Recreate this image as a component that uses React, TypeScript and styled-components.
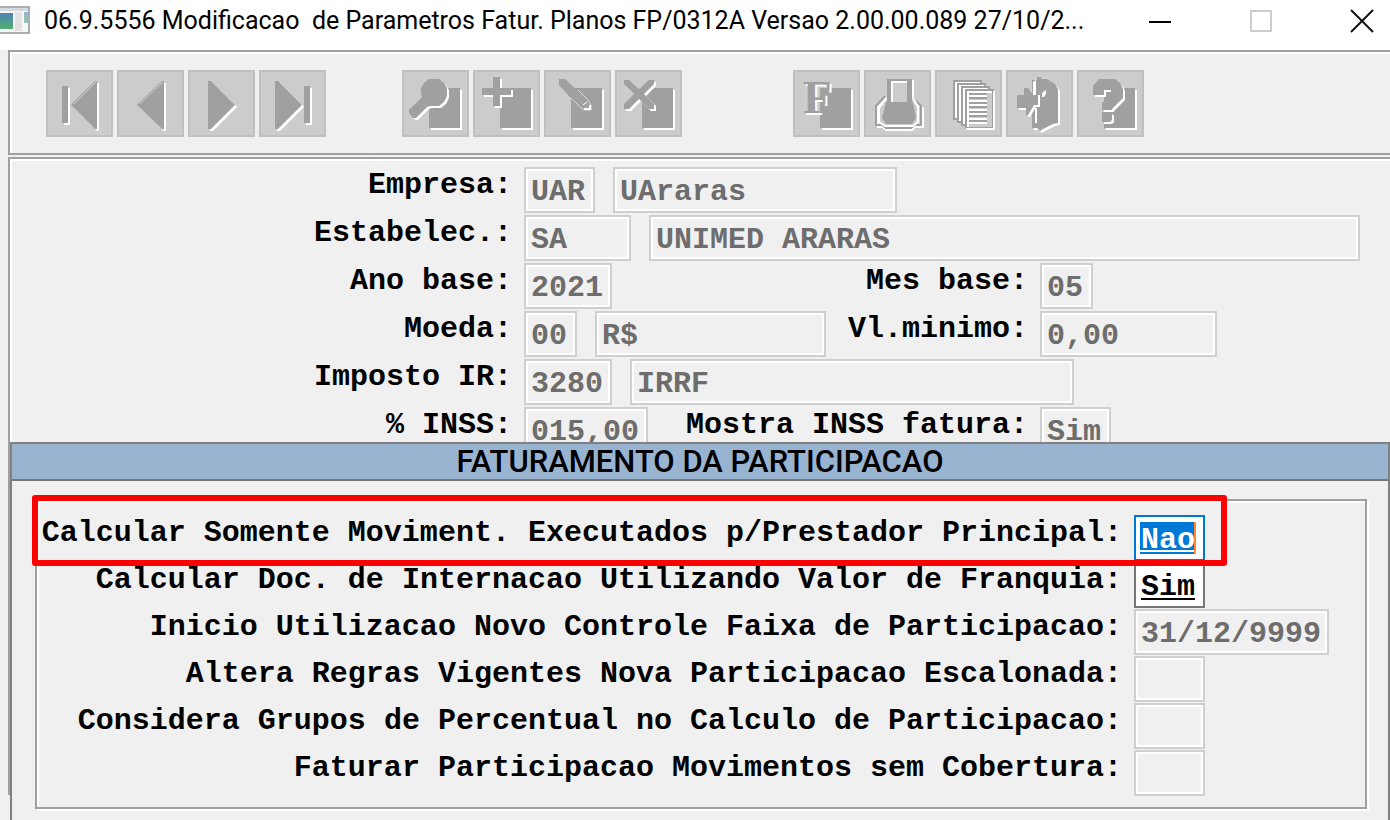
import React, { ReactNode, useId } from 'react';
import styled, { createGlobalStyle, css } from 'styled-components';

const GlobalStyle = createGlobalStyle`
  *, *::before, *::after { box-sizing: border-box; }
  body { margin: 0; background: #f0f0f0; color: #000; }
`;

const FACE = '#f0f0f0';
const SHADE = '#a0a0a0';
const MONO = '"Liberation Mono", monospace';

/* ---------- window frame ---------- */

const Window = styled.div`
  display: flex;
  flex-direction: column;
  min-height: 100vh;
  background: ${FACE};
  overflow: hidden;
`;

const TitleBar = styled.header`
  display: flex;
  align-items: flex-start;
  height: 50px;
  background: #fff;
`;

const AppIcon = styled.svg`
  flex: none;
  width: 32px;
  height: 42px;
`;

const Title = styled.h1`
  flex: 1;
  margin: 0;
  padding-left: 12px;
  font: 400 25px/42px Roboto, sans-serif;
  white-space: pre;
  overflow: hidden;
`;

const WindowButtons = styled.div`
  display: flex;
  gap: 45px;
`;

const WindowButton = styled.button`
  display: grid;
  place-items: center;
  width: 56px;
  height: 42px;
  padding: 0;
  border: 0;
  background: none;
`;

/* ---------- toolbar ---------- */

const Toolbar = styled.nav`
  display: flex;
  margin-left: 8px;
  padding: 18px 36px 16px;
  border: solid ${SHADE};
  border-width: 2px 0 2px 2px;
  box-shadow: inset 2px 2px 0 #fff;
`;

const ButtonGroup = styled.div<{ $before?: number }>`
  display: flex;
  gap: 4px;
  margin-left: ${(p) => p.$before ?? 0}px;
`;

const ToolButton = styled.button`
  width: 67px;
  height: 67px;
  padding: 0;
  border: 2px solid #c0c0c0;
  background: #ccc;

  svg {
    display: block;
    margin: -2px;
  }
`;

/* ---------- form ---------- */

const Stage = styled.main`
  position: relative;
  flex: 1;
  margin: 2px 0 0 8px;
  padding-bottom: 25px;
`;

const FormPanel = styled.form`
  display: flex;
  flex-direction: column;
  gap: 2px;
  min-height: 638px;
  padding: 8px 30px 0 2px;
  border: solid ${SHADE};
  border-width: 2px 0 0 2px;
  box-shadow: inset 2px 2px 0 #fff;
`;

const Row = styled.div`
  display: grid;
  grid-template-columns: 500px 504px 1fr;
  column-gap: 12px;
`;

const Fields = styled.div<{ $wide?: boolean }>`
  display: flex;
  gap: 18px;
  ${(p) => p.$wide && css`grid-column: 2 / 4;`}
`;

const Label = styled.label`
  font: 700 30px/36px ${MONO};
  text-align: right;
  white-space: nowrap;
`;

const InlineLabel = styled(Label)`
  margin-left: auto;
`;

type FieldState = 'locked' | 'active' | 'open';

const fieldLook = {
  locked: css`
    color: #6d6d6d;
    background: ${FACE};
    border-color: #cfcfcf;
    box-shadow: inset 0 0 0 2px #fff;
  `,
  active: css`
    color: #fff;
    border-color: #0078d7;
    background:
      linear-gradient(#0078d7, #0078d7) 4px 5px / 54px 28px no-repeat,
      linear-gradient(#0078d7, #0078d7) 4px 35px / 54px 2px no-repeat,
      linear-gradient(#ff8728, #ff8728) 58px 5px / 2px 32px no-repeat,
      #fff;
  `,
  open: css`
    color: #000;
    border-color: #767676;
    background: #fff;
    text-decoration: underline 2px;
    text-underline-offset: 3px;
  `,
};

const Field = styled.input<{ $width?: number; $state?: FieldState }>`
  height: 46px;
  width: ${(p) => (p.$width ? `${p.$width}px` : 'auto')};
  flex: ${(p) => (p.$width ? 'none' : '1')};
  min-width: 0;
  margin: 0;
  padding: 4px 0 0 5px;
  border: 2px solid;
  border-radius: 0;
  outline: 0;
  font: 700 30px/34px ${MONO};
  ${(p) => fieldLook[p.$state ?? 'locked']}
`;

/* ---------- dialog over the form ---------- */

const Dialog = styled.section`
  position: absolute;
  top: 285px;
  left: 2px;
  right: 0;
  bottom: 0;
  border: solid #808080;
  border-width: 2px 2px 0;
  background: ${FACE};
`;

const DialogTitle = styled.h2`
  margin: 0;
  border-bottom: 2px solid #767676;
  background: #99b4d1;
  font: 500 31px/35px Roboto, sans-serif;
  text-align: center;
`;

const GroupBox = styled.div`
  position: relative;
  margin: 18px 21px 0 23px;
  padding: 14px 0 10px;
  border: 2px solid ${SHADE};
  box-shadow: inset 2px 2px 0 #fff, 2px 2px 0 #fff;
`;

const DialogRow = styled.div`
  display: grid;
  grid-template-columns: 1085px 1fr;
  column-gap: 12px;
  height: 47px;
`;

const Highlight = styled.div`
  position: absolute;
  top: -6px;
  left: -5px;
  width: 1195px;
  height: 71px;
  border: 6px solid #f00;
  border-radius: 3px;
  pointer-events: none;
`;

/* ---------- icons ---------- */

/* A disabled glyph: a white copy shifted down and right under the grey one. */
const Emboss = ({ children }: { children: ReactNode }) => (
  <>
    <g fill="#fff" transform="translate(2 2)">{children}</g>
    <g fill={SHADE}>{children}</g>
  </>
);

const Icon = ({ children }: { children: ReactNode }) => (
  <svg width="67" height="67" viewBox="0 0 67 67" aria-hidden="true">{children}</svg>
);

const Sheet = () => (
  <Emboss><rect x="27" y="18" width="31" height="40" /></Emboss>
);

const FirstIcon = () => (
  <Icon>
    <Emboss><path d="M16 16h6v37h-6z" /></Emboss>
    <Emboss><path d="M49 11h2v48h-2L25 35z" /></Emboss>
    <path d="M28 34 50 12" stroke="#ccc" strokeWidth="1" />
  </Icon>
);

const PreviousIcon = () => (
  <Icon>
    <Emboss><path d="M45 11h2v48h-2L20 35z" /></Emboss>
    <path d="M23 34 46 12" stroke="#ccc" strokeWidth="1" />
  </Icon>
);

const NextIcon = () => (
  <Icon><Emboss><path d="M20 11h3l24 24-24 24h-3z" /></Emboss></Icon>
);

const LastIcon = () => (
  <Icon>
    <Emboss><path d="M16 11h3l24 24-24 24h-3z" /></Emboss>
    <Emboss><path d="M45 16h6v37h-6z" /></Emboss>
  </Icon>
);

const SearchIcon = () => (
  <Icon>
    <Sheet />
    <Emboss>
      <path d="M27 9h10l5 4 3 5v8l-3 6-5 4h-9l-3 1-11 11h-3l-4-5v-3l13-13-1-4v-5l3-5z" />
    </Emboss>
  </Icon>
);

const AddIcon = () => (
  <Icon>
    <Sheet />
    <Emboss><path d="M20 7h7v11h11v7H27v11h-7V25H9v-7h11z" /></Emboss>
  </Icon>
);

const EditIcon = () => (
  <Icon>
    <Sheet />
    <path d="M15 9h6l23 22 2 9h-6l-6-4-19-21z" fill={SHADE} />
    <path d="M34 20 44 30 47 35V40H40L36 37 27 28" fill="none" stroke="#d8d8d8" strokeWidth="1" />
    <path d="M46 35v4h-6" fill="none" stroke="#fff" strokeWidth="2" />
    <path d="M39 35l4-3" stroke="#fff" strokeWidth="1" />
  </Icon>
);

const DeleteIcon = () => (
  <Icon>
    <Sheet />
    <Emboss>
      <path d="M9 10h5l10 9 10-9h5v4L29 24l10 10v5h-5L24 29 14 39H9v-5l10-10L9 14z" />
    </Emboss>
  </Icon>
);

const FunctionIcon = () => (
  <Icon>
    <Sheet />
    <Emboss>
      <text x="10" y="43" fontFamily="Liberation Serif, serif" fontWeight="700" fontSize="47">F</text>
    </Emboss>
  </Icon>
);

const PrintIcon = () => (
  <Icon>
    <path d="M23 28 14 37v20h5l3 3h26l3-3h8V39l-8-9" fill="none" stroke="#fff" strokeWidth="2" />
    <path d="M21 26 12 36v19h6l4 3h25l4-3h6V36l-9-9" fill="none" stroke={SHADE} strokeWidth="2" />
    <path d="M19 33l-4 5v14l6 4h28l5-4V36l-4-4" fill="none" stroke="#fff" strokeWidth="2" />
    <path d="M23 9h25v24H23z" fill={SHADE} />
    <path d="M49 10v18l3 5" fill="none" stroke="#fff" strokeWidth="2" />
    <path d="M22 32h27l3 16-4 6H22l-4-6z" fill={SHADE} />
    <path d="M27 11h16v21H27z" fill="#ccc" />
    <path d="M28 32V12h15" fill="none" stroke="#fff" strokeWidth="2" />
  </Icon>
);

const ReportIcon = () => (
  <Icon>
    {[0, 4, 8, 12].map((o) => (
      <g key={o}>
        <rect x={18 + o} y={10 + o * 0.75} width="28" height="39" fill="#fff" />
        <rect x={19 + o} y={11 + o * 0.75} width="27" height="38" fill="#ccc" stroke={SHADE} strokeWidth="2" />
        <path d={`M${21 + o} ${48 + o * 0.75}v-35h24`} fill="none" stroke="#fff" strokeWidth="2" />
      </g>
    ))}
    <path d="M59 21v38H31" fill="none" stroke="#fff" strokeWidth="2" />
    <path d="M34 26h18M34 31h18M34 35h18M34 40h18M34 44h18M34 49h18M34 53h18" stroke="#fff" strokeWidth="2" />
    <path d="M34 24h18M34 28h18M34 33h18M34 37h18M34 42h18M34 46h18M34 51h18" stroke={SHADE} strokeWidth="2" />
  </Icon>
);

const ExitIcon = () => (
  <Icon>
    <Emboss><path d="M26 10h5V7h4v2h6l8 5 3 5v34l-5 1-4 2-6 3-3 2-3-3h-5z" /></Emboss>
    <path d="M29 38h2v15h-2z" fill="#fff" />
    <Emboss><path d="M11 25h7v-7h4l4 5h6v12h-4l-6 10h-2V38h-9z" /></Emboss>
    <path d="M27 12l3-2v15h-3z" fill="#fff" />
    <path d="M36 27v-4l4-3v4l-2 3z" fill="#fff" />
  </Icon>
);

const HelpIcon = () => (
  <Icon>
    <Sheet />
    <Emboss>
      <path d="M22 9h16l6 5 2 5v9L35 39v1H25v-7l9-8v-5h-7v5H16v-9z" />
      <path d="M25 42h8l2 2v6l-2 2h-8z" />
    </Emboss>
  </Icon>
);

/* ---------- data ---------- */

const toolGroups = [
  {
    before: 0,
    tools: [
      ['Primeiro', FirstIcon],
      ['Anterior', PreviousIcon],
      ['Proximo', NextIcon],
      ['Ultimo', LastIcon],
    ],
  },
  {
    before: 76,
    tools: [
      ['Pesquisar', SearchIcon],
      ['Incluir', AddIcon],
      ['Modificar', EditIcon],
      ['Excluir', DeleteIcon],
    ],
  },
  {
    before: 111,
    tools: [
      ['Funcoes', FunctionIcon],
      ['Imprimir', PrintIcon],
      ['Relatorio', ReportIcon],
      ['Sair', ExitIcon],
      ['Ajuda', HelpIcon],
    ],
  },
] as { before: number; tools: [string, () => React.JSX.Element][] }[];

type Box = { value: string; width?: number };
type FormLine = { label: string; boxes: Box[]; wide?: boolean; second?: { label: string; box: Box } };

const formLines: FormLine[] = [
  { label: 'Empresa:', boxes: [{ value: 'UAR', width: 71 }, { value: 'UAraras', width: 284 }] },
  { label: 'Estabelec.:', wide: true, boxes: [{ value: 'SA', width: 107 }, { value: 'UNIMED ARARAS' }] },
  {
    label: 'Ano base:',
    boxes: [{ value: '2021', width: 88 }],
    second: { label: 'Mes base:', box: { value: '05', width: 53 } },
  },
  {
    label: 'Moeda:',
    boxes: [{ value: '00', width: 53 }, { value: 'R$', width: 231 }],
    second: { label: 'Vl.minimo:', box: { value: '0,00', width: 177 } },
  },
  { label: 'Imposto IR:', wide: true, boxes: [{ value: '3280', width: 88 }, { value: 'IRRF', width: 444 }] },
  {
    label: '% INSS:',
    boxes: [{ value: '015,00', width: 124 }],
    second: { label: 'Mostra INSS fatura:', box: { value: 'Sim', width: 71 } },
  },
];

const dialogLines: { label: string; value: string; width: number; state?: FieldState }[] = [
  { label: 'Calcular Somente Moviment. Executados p/Prestador Principal:', value: 'Nao', width: 71, state: 'active' },
  { label: 'Calcular Doc. de Internacao Utilizando Valor de Franquia:', value: 'Sim', width: 71, state: 'open' },
  { label: 'Inicio Utilizacao Novo Controle Faixa de Participacao:', value: '31/12/9999', width: 195 },
  { label: 'Altera Regras Vigentes Nova Participacao Escalonada:', value: '', width: 71 },
  { label: 'Considera Grupos de Percentual no Calculo de Participacao:', value: '', width: 71 },
  { label: 'Faturar Participacao Movimentos sem Cobertura:', value: '', width: 71 },
];

/* ---------- composed rows ---------- */

const FormRow = ({ label, boxes, wide, second }: FormLine) => {
  const id = useId();
  return (
    <Row>
      <Label htmlFor={id}>{label}</Label>
      <Fields $wide={wide}>
        {boxes.map((box, i) => (
          <Field
            key={box.value}
            id={i === 0 ? id : undefined}
            aria-label={i === 0 ? undefined : `${label} descricao`}
            $width={box.width}
            value={box.value}
            readOnly
          />
        ))}
        {second && <InlineLabel htmlFor={`${id}-b`}>{second.label}</InlineLabel>}
      </Fields>
      {second && <Field id={`${id}-b`} $width={second.box.width} value={second.box.value} readOnly />}
    </Row>
  );
};

export default function App() {
  const id = useId();
  return (
    <Window>
      <GlobalStyle />
      <TitleBar>
        <AppIcon viewBox="0 0 32 42" aria-hidden="true">
          <defs>
            <linearGradient id="pane" x1="0" y1="0" x2="0" y2="1">
              <stop offset="0" stopColor="#4f83b5" />
              <stop offset="1" stopColor="#4fae6c" />
            </linearGradient>
          </defs>
          <rect x="-4" y="7" width="33" height="26" fill="#f7f7f7" stroke="#a9abb0" strokeWidth="2" />
          <rect x="0" y="8" width="28" height="3" fill="#d5d9df" />
          <rect x="0" y="13" width="13" height="16" fill="url(#pane)" />
          <rect x="15" y="12" width="7" height="19" fill="#e2e2e2" />
          <rect x="24" y="12" width="4" height="11" fill="url(#pane)" opacity="0.6" />
        </AppIcon>
        <Title>06.9.5556 Modificacao  de Parametros Fatur. Planos FP/0312A Versao 2.00.00.089 27/10/2...</Title>
        <WindowButtons>
          <WindowButton aria-label="Minimizar">
            <svg width="24" height="24"><path d="M1 13h22" stroke="#000" strokeWidth="2" /></svg>
          </WindowButton>
          <WindowButton aria-label="Maximizar" disabled>
            <svg width="24" height="24"><path d="M2 2h20v20H2z" fill="none" stroke="#ccc" strokeWidth="2" /></svg>
          </WindowButton>
          <WindowButton aria-label="Fechar">
            <svg width="24" height="24"><path d="M1 1l22 22M23 1 1 23" stroke="#111" strokeWidth="2" /></svg>
          </WindowButton>
        </WindowButtons>
      </TitleBar>

      <Toolbar>
        {toolGroups.map((group) => (
          <ButtonGroup key={group.before} $before={group.before}>
            {group.tools.map(([name, Glyph]) => (
              <ToolButton key={name} aria-label={name} disabled>
                <Glyph />
              </ToolButton>
            ))}
          </ButtonGroup>
        ))}
      </Toolbar>

      <Stage>
        <FormPanel>
          {formLines.map((line) => (
            <FormRow key={line.label} {...line} />
          ))}
        </FormPanel>

        <Dialog aria-labelledby={`${id}-title`}>
          <DialogTitle id={`${id}-title`}>FATURAMENTO DA PARTICIPACAO</DialogTitle>
          <GroupBox>
            {dialogLines.map((line, i) => (
              <DialogRow key={line.label}>
                <Label htmlFor={`${id}-${i}`}>{line.label}</Label>
                <Field id={`${id}-${i}`} $width={line.width} $state={line.state} value={line.value} readOnly />
              </DialogRow>
            ))}
            <Highlight />
          </GroupBox>
        </Dialog>
      </Stage>
    </Window>
  );
}
